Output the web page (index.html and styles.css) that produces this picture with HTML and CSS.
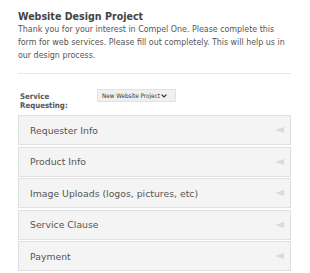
FILE: index.html
```html
<!doctype html>
<html>
	<head>
		<meta charset="utf-8"/>
		<title>Website Design Project</title>
		<link rel="stylesheet" href="styles.css">
	</head>
	<body>
		<!-- intro -->
		<div class="intro">
			<h1 class="title">Website Design Project</h1>
			<p class="lead">Thank you for your interest in Compel One. Please complete this form for web services. Please fill out completely. This will help us in our design process.</p>
		</div>
		<!-- service -->
		<div class="service">
			<label class="service-label" for="service">Service Requesting:</label>
			<div class="select-wrap">
				<select class="service-select" id="service">
					<option>New Website Project</option>
					<option>Website Redesign</option>
				</select>
				<svg class="chevron" width="6" height="4" viewBox="0 0 6 4"><path d="M0.6 0.6 L3 3 L5.4 0.6" fill="none" stroke="#333" stroke-width="1.2"/></svg>
			</div>
		</div>
		<!-- sections -->
		<div class="panels">
			<div class="panel"><span>Requester Info</span><i class="arrow"></i></div>
			<div class="panel"><span>Product Info</span><i class="arrow"></i></div>
			<div class="panel"><span>Image Uploads (logos, pictures, etc)</span><i class="arrow"></i></div>
			<div class="panel"><span>Service Clause</span><i class="arrow"></i></div>
			<div class="panel"><span>Payment</span><i class="arrow"></i></div>
		</div>
	</body>
</html>
```
FILE: styles.css
```css
body{
	margin:0;
	padding:0 19px 0 18px;
	font-family:"DejaVu Sans",Verdana,sans-serif;
	font-stretch:condensed;
	color:#555;
	background:#fff;
}
.intro{
	padding-top:10px;
	padding-bottom:11px;
	border-bottom:1px solid #e6e6e6;
}
.title{
	margin:0;
	font-size:10.6px;
	line-height:13px;
	color:#444;
}
.lead{
	margin:0;
	font-size:8.8px;
	line-height:13px;
	color:#555;
}
.service{
	display:flex;
	align-items:flex-start;
	padding:15px 0 0 2px;
	height:26px;
}
.service-label{
	width:77px;
	font-size:7.8px;
	font-weight:bold;
	line-height:8.5px;
	color:#555;
	padding-top:4px;
}
.select-wrap{
	position:relative;
}
.service-select{
	-webkit-appearance:none;
	appearance:none;
	display:block;
	font-family:"DejaVu Sans",Verdana,sans-serif;
	font-stretch:condensed;
	font-size:6.3px;
	height:13px;
	width:79px;
	margin:0;
	padding:0 10px 0 4px;
	border:1px solid #e2e2e2;
	border-radius:0;
	background:#f0f0f0;
	color:#333;
}
.chevron{
	position:absolute;
	right:9px;
	top:5px;
}
.panels{
	display:flex;
	flex-direction:column;
	gap:1.5px;
}
.panel{
	display:flex;
	align-items:center;
	justify-content:space-between;
	height:28px;
	padding:0 6px 0 11px;
	border:1px solid #e0e0e0;
	background:#f4f4f4;
	font-size:9.3px;
	font-stretch:normal;
	color:#555;
}
.arrow{
	width:0;
	height:0;
	border-top:3.5px solid transparent;
	border-bottom:3.5px solid transparent;
	border-right:9px solid #dadada;
}
```
